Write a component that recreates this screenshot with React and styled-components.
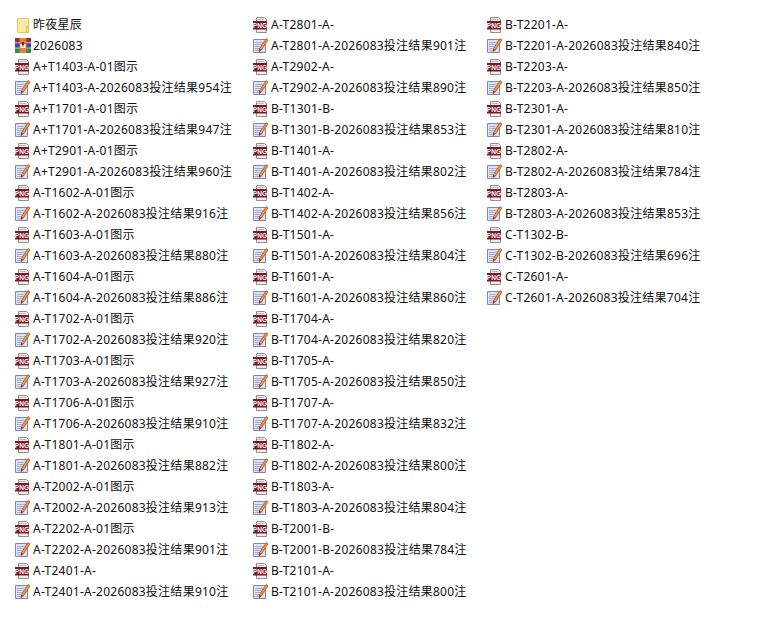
import React from 'react';
import styled, { createGlobalStyle } from 'styled-components';

const GlobalStyle = createGlobalStyle`
  html, body {
    margin: 0;
    padding: 0;
    background-color: #fff;
  }
`;

const pair = (id, count, sheet = 'A') => [
  { type: 'png', name: `${id}-${sheet}-` },
  { type: 'doc', name: `${id}-${sheet}-2026083投注结果${count}注` },
];
const named = (id, count) => [
  { type: 'png', name: `${id}-A-01图示` },
  { type: 'doc', name: `${id}-A-2026083投注结果${count}注` },
];

const files = [
  { type: 'folder', name: '昨夜星辰' },
  { type: 'rar', name: '2026083' },
  ...named('A+T1403', 954),
  ...named('A+T1701', 947),
  ...named('A+T2901', 960),
  ...named('A-T1602', 916),
  ...named('A-T1603', 880),
  ...named('A-T1604', 886),
  ...named('A-T1702', 920),
  ...named('A-T1703', 927),
  ...named('A-T1706', 910),
  ...named('A-T1801', 882),
  ...named('A-T2002', 913),
  ...named('A-T2202', 901),
  ...pair('A-T2401', 910),
  ...pair('A-T2801', 901),
  ...pair('A-T2902', 890),
  ...pair('B-T1301', 853, 'B'),
  ...pair('B-T1401', 802),
  ...pair('B-T1402', 856),
  ...pair('B-T1501', 804),
  ...pair('B-T1601', 860),
  ...pair('B-T1704', 820),
  ...pair('B-T1705', 850),
  ...pair('B-T1707', 832),
  ...pair('B-T1802', 800),
  ...pair('B-T1803', 804),
  ...pair('B-T2001', 784, 'B'),
  ...pair('B-T2101', 800),
  ...pair('B-T2201', 840),
  ...pair('B-T2203', 850),
  ...pair('B-T2301', 810),
  ...pair('B-T2802', 784),
  ...pair('B-T2803', 853),
  ...pair('C-T1302', 696, 'B'),
  ...pair('C-T2601', 704),
];

const FileGrid = styled.div`
  display: grid;
  grid-auto-flow: column;
  grid-template-rows: repeat(28, 21px);
  grid-template-columns: 238px 234px 1fr;
  width: 771px;
  height: 635px;
  box-sizing: border-box;
  padding: 14px 0 0 15px;
  background-color: #fff;
`;

const FileRow = styled.div`
  display: flex;
  align-items: center;
  gap: 2px;
  height: 21px;
  font-family: "Noto Sans", "Noto Sans CJK SC", sans-serif;
  font-size: 12px;
  letter-spacing: 0.25px;
  color: #111;
  white-space: nowrap;
`;

const FileName = styled.span`
  display: block;
  line-height: 21px;
`;

const IconBox = styled.svg`
  display: block;
  flex: none;
  width: 16px;
  height: 16px;
`;

const FolderIcon = () => (
  <IconBox viewBox="0 0 16 16">
    <path d="M2.5 1.5h11v14h-11z" fill="#fde99f" stroke="#ecc95a" />
    <path d="M11.5 9.5h2v6h-2z" fill="#fbe089" stroke="#e2b83f" strokeWidth=".8" />
  </IconBox>
);

const RarIcon = () => (
  <IconBox viewBox="0 0 16 16">
    <rect x="0" y="0" width="16" height="5" fill="#a5264d" />
    <rect x="0" y="5" width="16" height="5" fill="#3d48a6" />
    <rect x="0" y="10" width="16" height="5" fill="#2f8f3e" />
    <rect x="0" y="4.4" width="16" height=".8" fill="#e5e5e5" />
    <rect x="0" y="9.6" width="16" height=".8" fill="#e5e5e5" />
    <rect x="4.5" y="0" width="7" height="15" fill="#dc8433" />
    <path d="M5.5 10V6h1.5v2.5h2V6h1.5v4z" fill="#fff" />
    <rect x="6.8" y="4" width="2.4" height="3" fill="#8e1c1c" />
  </IconBox>
);

const PngIcon = () => (
  <IconBox viewBox="0 0 16 16">
    <path d="M3.5 0.5h8l2 2v13h-10z" fill="#f0f0f0" stroke="#8f8f8f" />
    <path d="M4 2.5h7" stroke="#bdbdbd" />
    <rect x="0" y="4" width="14" height="8.5" fill="#7d1626" />
    <text
      x="7"
      y="11"
      textAnchor="middle"
      fontFamily="'Liberation Sans', sans-serif"
      fontSize="6.5"
      fontWeight="700"
      letterSpacing=".2"
      fill="#fff"
    >
      PNG
    </text>
  </IconBox>
);

const DocIcon = () => (
  <IconBox viewBox="0 0 16 16">
    <path d="M0.5 1.5h12v13h-12z" fill="#dfe2f3" stroke="#7f83bd" />
    <path d="M2 4.5h8M2 6.5h7M2 8.5h6M2 10.5h5M2 12.5h4" stroke="#a8abd2" />
    <path d="M13 0.5l2 1.4-6.5 10-2.4 1.6.4-2.8z" fill="#e8963c" stroke="#a9552a" strokeWidth=".7" />
    <path d="M6 13.5l.4-2.8 2 1.2z" fill="#8f2d26" />
  </IconBox>
);

const icons = { folder: FolderIcon, rar: RarIcon, png: PngIcon, doc: DocIcon };

const App = () => {
  return (
    <>
      <GlobalStyle />
      <FileGrid>
        {files.map((file) => {
          const Icon = icons[file.type];
          return (
            <FileRow key={file.name}>
              <Icon />
              <FileName>{file.name}</FileName>
            </FileRow>
          );
        })}
      </FileGrid>
    </>
  );
};

export default App;
